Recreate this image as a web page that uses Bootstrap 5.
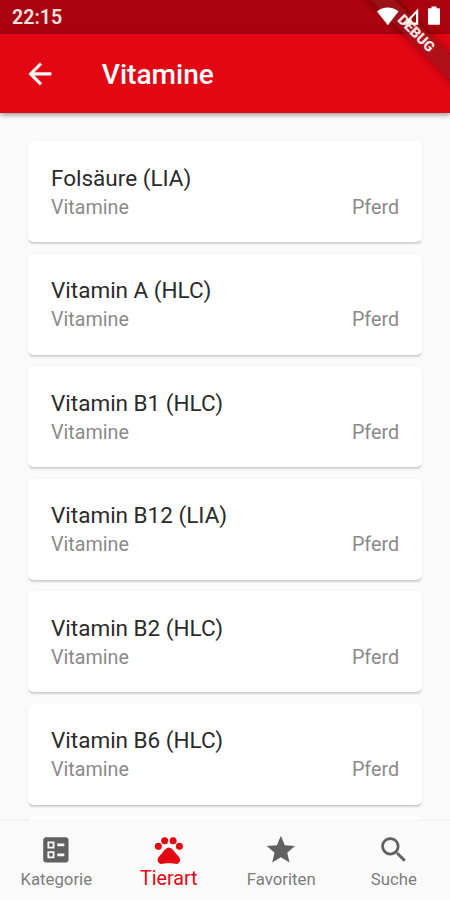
<!DOCTYPE html>
<html lang="de">
<head>
<meta charset="utf-8">
<meta name="viewport" content="width=device-width, initial-scale=1">
<title>Vitamine</title>
<link href="https://cdn.jsdelivr.net/npm/bootstrap@5.3.0/dist/css/bootstrap.min.css" rel="stylesheet">
<style>
  body { font-family: Roboto, sans-serif; background: #fafafa; color: #212121; }
  .app { height: 900px; }
  .statusbar { height: 34px; background: #a9030e; font-size: 19.6px; font-weight: 600; color: #fbe3e4; padding-left: 12px; padding-right: 9px; }
  .clock { padding-top: 2px; }
  .status-icons { position: relative; z-index: 3; }
  .appbar { height: 79px; background: #e30613; box-shadow: 0 2px 5px rgba(0,0,0,.4); padding-left: 23px; z-index: 1; }
  .appbar-title { font-size: 28.1px; font-weight: 500; line-height: 1; margin-left: 45px; padding-top: 3px; }
  .ico { width: 33.75px; height: 33.75px; fill: currentColor; display: block; }
  .items { padding: 28px 28px 0; gap: 11.5px; min-height: 0; }
  .item { height: 101px; flex: none; border: 0; border-radius: 5.6px; padding: 23.5px 23px 0; background: #fff;
          box-shadow: 0 3px 1.5px -1.5px rgba(0,0,0,.12), 0 1px 2px rgba(0,0,0,.06), 0 1px 4px rgba(0,0,0,.04); }
  .item-name { font-size: 22.5px; line-height: 27px; color: #2b2b2b; }
  .item-sub { font-size: 19.7px; line-height: 23px; color: #8a8a8a; margin-top: 4px; }
  .tabs { height: 79px; background: #fafafa; box-shadow: 0 -1px 2px rgba(0,0,0,.05); z-index: 1; }
  .tab { color: #7d7d7d; padding-top: 12px; }
  .tab .ico { color: #616161; }
  .tab-label { font-size: 16.8px; line-height: 20px; margin-top: 2px; }
  .tab.current, .tab.current .ico { color: #e30613; }
  .tab.current .tab-label { font-size: 19.7px; margin-top: 2px; }
  .debug-corner { width: 90px; height: 90px; top: 0; right: 0; z-index: 2; pointer-events: none; }
  .debug-corner.upper { z-index: 4; }
  .debug-band { position: absolute; width: 140px; height: 17px; left: -13.8px; top: 25.3px; transform: rotate(45deg);
                font-size: 14.3px; font-weight: 900; line-height: 17px; text-align: center; color: #f7e3e3; }
  .debug-band.fill { background: rgba(150,24,28,.68); box-shadow: 0 0 8px rgba(0,0,0,.4); }
</style>
</head>
<body>
<div class="app d-flex flex-column position-relative overflow-hidden">
  <div class="statusbar d-flex align-items-center justify-content-between flex-shrink-0">
    <span class="clock">22:15</span>
    <svg class="status-icons" width="64" height="34" viewBox="0 0 64 34" fill="#fff" aria-hidden="true">
      <path d="M0 11.500C6 6.300 15.500 6.300 21.500 11.500L10.800 25.200Z"/>
      <path d="M41.200 8.500V24.800H25.500Z M39 13.500V22.600H34.500V18.500Z" fill-rule="evenodd"/>
      <path d="M52 8.200h2.500V6.500h5v1.700H62q1 0 1 1V23.500q0 1.300-1 1.300H52q-1 0-1-1.300V9.200q0-1 1-1z"/>
    </svg>
  </div>
  <header class="appbar d-flex align-items-center flex-shrink-0 text-white position-relative">
    <svg class="ico" viewBox="0 0 24 24" stroke="currentColor" stroke-width=".3"><path d="M20 11H7.830l5.590-5.590L12 4l-8 8 8 8 1.410-1.410L7.830 13H20v-2z"/></svg>
    <h1 class="appbar-title mb-0">Vitamine</h1>
  </header>
  <main class="items d-flex flex-column flex-grow-1 overflow-hidden">
    <div class="card item"><div class="item-name">Folsäure (LIA)</div><div class="item-sub d-flex justify-content-between"><span>Vitamine</span><span>Pferd</span></div></div>
    <div class="card item"><div class="item-name">Vitamin A (HLC)</div><div class="item-sub d-flex justify-content-between"><span>Vitamine</span><span>Pferd</span></div></div>
    <div class="card item"><div class="item-name">Vitamin B1 (HLC)</div><div class="item-sub d-flex justify-content-between"><span>Vitamine</span><span>Pferd</span></div></div>
    <div class="card item"><div class="item-name">Vitamin B12 (LIA)</div><div class="item-sub d-flex justify-content-between"><span>Vitamine</span><span>Pferd</span></div></div>
    <div class="card item"><div class="item-name">Vitamin B2 (HLC)</div><div class="item-sub d-flex justify-content-between"><span>Vitamine</span><span>Pferd</span></div></div>
    <div class="card item"><div class="item-name">Vitamin B6 (HLC)</div><div class="item-sub d-flex justify-content-between"><span>Vitamine</span><span>Pferd</span></div></div>
    <div class="card item"></div>
  </main>
  <nav class="tabs row g-0 flex-shrink-0 position-relative">
    <div class="tab col-3 d-flex flex-column align-items-center">
      <svg class="ico" viewBox="0 0 24 24"><path fill-rule="evenodd" d="M13 9.500h5v-2h-5v2zm0 7h5v-2h-5v2zm6 4.500H5c-1.100 0-2-.9-2-2V5c0-1.100.9-2 2-2h14c1.100 0 2 .9 2 2v14c0 1.100-.9 2-2 2zM6 11h5V6H6v5zm1.300-3.700h2.400v2.400H7.300zM6 18h5v-5H6v5zm1.300-3.700h2.400v2.400H7.300z"/></svg>
      <span class="tab-label">Kategorie</span>
    </div>
    <div class="tab current col-3 d-flex flex-column align-items-center">
      <svg class="ico" viewBox="0 0 24 24"><circle cx="4.500" cy="9.500" r="2.500"/><circle cx="9" cy="5.500" r="2.500"/><circle cx="15" cy="5.500" r="2.500"/><circle cx="19.500" cy="9.500" r="2.500"/><path d="M17.340 14.860c-.87-1.020-1.600-1.890-2.480-2.910-.46-.54-1.050-1.080-1.750-1.320-.11-.04-.22-.07-.33-.09-.25-.04-.52-.04-.78-.04s-.53 0-.79.05c-.11.02-.22.05-.33.09-.7.240-1.280.78-1.750 1.320-.87 1.020-1.600 1.890-2.480 2.910-1.310 1.310-2.920 2.760-2.620 4.790.29 1.020 1.020 2.030 2.330 2.320.73.150 3.060-.44 5.540-.44h.18c2.480 0 4.810.58 5.540.44 1.310-.29 2.040-1.310 2.330-2.320.31-2.040-1.300-3.490-2.610-4.800z"/></svg>
      <span class="tab-label">Tierart</span>
    </div>
    <div class="tab col-3 d-flex flex-column align-items-center">
      <svg class="ico" viewBox="0 0 24 24"><path d="M12 17.270L18.180 21l-1.640-7.030L22 9.240l-7.190-.61L12 2 9.190 8.630 2 9.240l5.460 4.730L5.820 21z"/></svg>
      <span class="tab-label">Favoriten</span>
    </div>
    <div class="tab col-3 d-flex flex-column align-items-center">
      <svg class="ico" viewBox="0 0 24 24"><path d="M15.500 14h-.79l-.28-.27C15.410 12.590 16 11.110 16 9.500 16 5.910 13.090 3 9.500 3S3 5.910 3 9.500 5.910 16 9.500 16c1.610 0 3.090-.59 4.230-1.570l.27.28v.79l5 4.990L20.490 19l-4.990-5zm-6 0C7.010 14 5 11.990 5 9.500S7.010 5 9.500 5 14 7.010 14 9.500 11.990 14 9.500 14z"/></svg>
      <span class="tab-label">Suche</span>
    </div>
  </nav>
  <div class="debug-corner position-absolute overflow-hidden"><div class="debug-band fill"></div></div>
  <div class="debug-corner upper position-absolute overflow-hidden"><div class="debug-band">DEBUG</div></div>
</div>
<script src="https://cdn.jsdelivr.net/npm/bootstrap@5.3.0/dist/js/bootstrap.bundle.min.js"></script>
</body>
</html>
